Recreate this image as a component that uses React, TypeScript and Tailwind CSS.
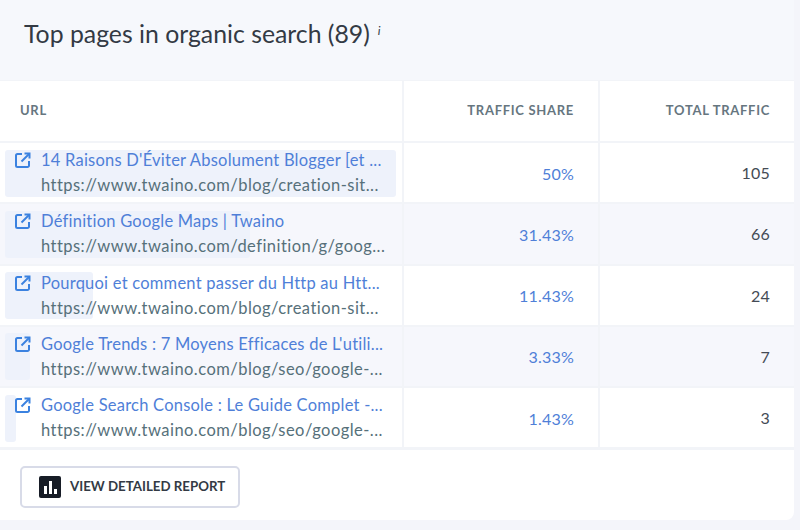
const rows = [
  { title: "14 Raisons D'Éviter Absolument Blogger [et ...", url: "https://www.twaino.com/blog/creation-sit...", share: "50%", total: "105", bar: "w-[391px]", tint: false },
  { title: "Définition Google Maps | Twaino", url: "https://www.twaino.com/definition/g/goog...", share: "31.43%", total: "66", bar: "w-[245px]", tint: true },
  { title: "Pourquoi et comment passer du Http au Htt...", url: "https://www.twaino.com/blog/creation-sit...", share: "11.43%", total: "24", bar: "w-[88px]", tint: false },
  { title: "Google Trends : 7 Moyens Efficaces de L'utili...", url: "https://www.twaino.com/blog/seo/google-...", share: "3.33%", total: "7", bar: "w-[25px]", tint: true },
  { title: "Google Search Console : Le Guide Complet -...", url: "https://www.twaino.com/blog/seo/google-...", share: "1.43%", total: "3", bar: "w-[11px]", tint: false },
];

function OpenIcon() {
  return (
    <svg viewBox="0 0 16 16" fill="none" stroke="#3b82e0" strokeWidth="2" className="mt-[9px] h-[16px] w-[16px] shrink-0">
      <path d="M7 2H2.5a1.5 1.5 0 0 0-1.5 1.5v10A1.5 1.5 0 0 0 2.5 15h10a1.5 1.5 0 0 0 1.5-1.5V9" />
      <path d="M6.5 9.5 14 2" />
      <path d="M9.5 1.5H14.5V6.5" />
    </svg>
  );
}

function Row({ row }: { row: (typeof rows)[number] }) {
  const bg = row.tint ? "bg-[#f6f7fc]" : "bg-white";
  return (
    <div className="grid h-[59.25px] grid-cols-[402px_194px_194px] gap-x-[2px]">
      <div className={`relative pl-[15px] ${bg}`}>
        <div className={`absolute left-[5px] top-[6.5px] h-[47px] rounded-[3px] bg-[#eef2fb] ${row.bar}`} />
        <div className="relative flex gap-[10px]">
          <OpenIcon />
          <div className="pt-[5px] text-[16.5px] leading-[24px] whitespace-nowrap">
            <div className="tracking-[0.23px] text-[#4f7fd8]">{row.title}</div>
            <div className="mt-[1px] tracking-[0.46px] text-[#56707a]">{row.url}</div>
          </div>
        </div>
      </div>
      <div className={`flex items-center justify-end pr-[24px] pt-[2px] text-[16px] tracking-[0.2px] text-[#4f7fd8] ${bg}`}>{row.share}</div>
      <div className={`flex items-center justify-end pr-[24px] pt-[1px] text-[16px] tracking-[0.2px] text-[#444b55] ${bg}`}>{row.total}</div>
    </div>
  );
}

export default function App() {
  return (
    <div className="h-[530px] w-[800px] overflow-hidden bg-[#f4f5fa] font-['Lato',sans-serif]">
      <div className="h-[520px] w-[794px] overflow-hidden rounded-br-[8px] bg-white">
        <div className="flex h-[80px] items-start bg-[#f6f8fc] pl-[24px] pt-[17px]">
          <h2 className="text-[24.8px] leading-[34px] text-[#333a44]">Top pages in organic search (89)</h2>
          <span className="ml-[8px] text-[12px] italic leading-[28px] text-[#333a44]">i</span>
        </div>
        <div className="flex flex-col gap-y-[2px] bg-[#f2f4f8] pb-[2.5px] pt-[1px]">
          <div className="grid h-[60px] grid-cols-[402px_194px_194px] gap-x-[2px] text-[13px] font-bold tracking-[0.7px] text-[#66767f]">
            <div className="flex items-center bg-white pl-[20px]">URL</div>
            <div className="flex items-center justify-end bg-white pr-[24px]">TRAFFIC SHARE</div>
            <div className="flex items-center justify-end bg-white pr-[24px]">TOTAL TRAFFIC</div>
          </div>
          {rows.map((row) => (
            <Row key={row.title} row={row} />
          ))}
        </div>
        <div className="pl-[20px] pt-[16px]">
          <button className="flex h-[42px] w-[220px] items-center gap-[9px] rounded-[5px] border-2 border-[#d8dbe8] bg-white pl-[17px] text-[13.3px] font-bold text-[#333a44]">
            <svg viewBox="0 0 22 22" className="h-[22px] w-[22px]">
              <rect width="22" height="22" rx="2" fill="#171c26" />
              <rect x="5" y="10" width="3" height="8" fill="#fff" />
              <rect x="10" y="5" width="3" height="13" fill="#fff" />
              <rect x="15" y="13" width="3" height="5" fill="#fff" />
            </svg>
            VIEW DETAILED REPORT
          </button>
        </div>
      </div>
    </div>
  );
}
